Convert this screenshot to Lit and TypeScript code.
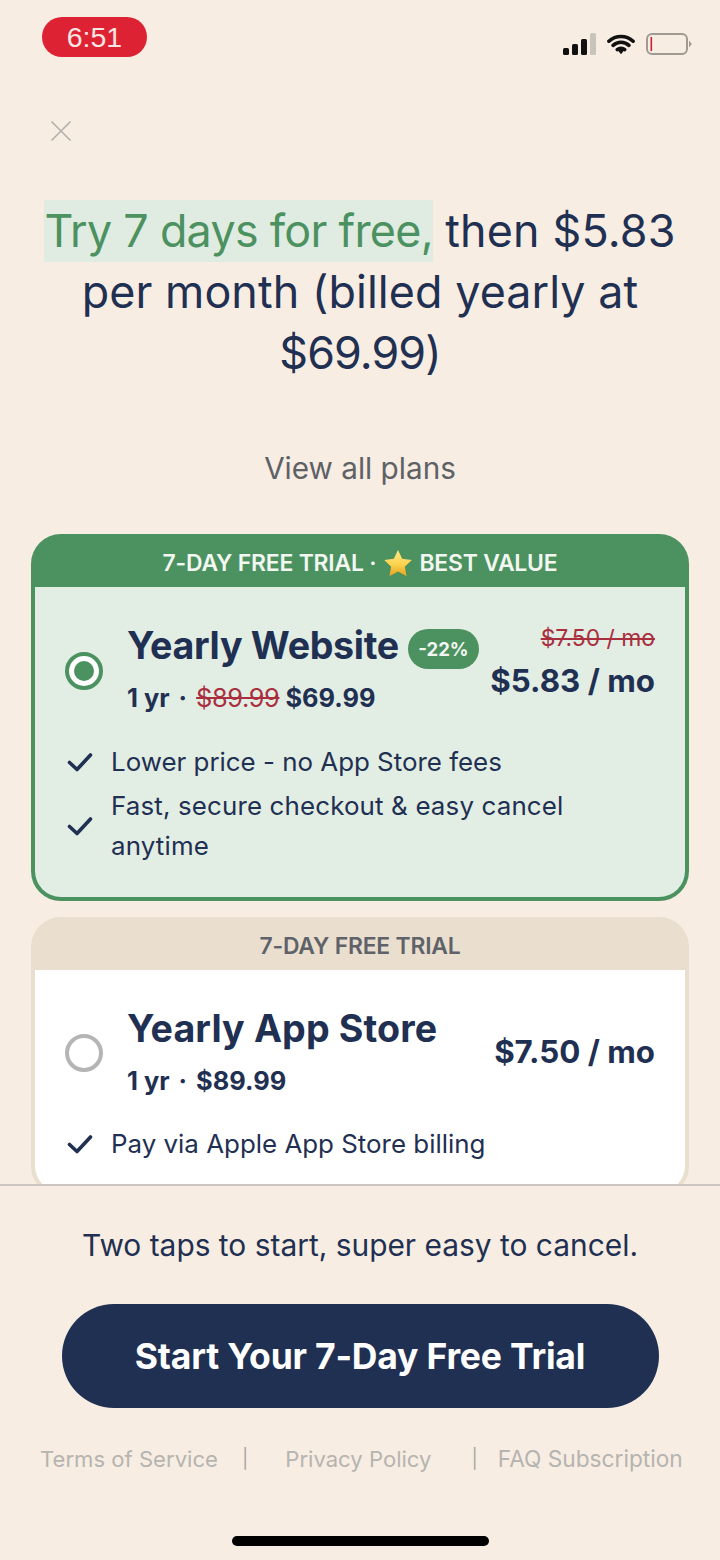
import { LitElement, html, css, svg } from 'lit';
import { customElement } from 'lit/decorators.js';

const check = svg`<path d="M2.500 12.500l7.500 7L23.500 5" fill="none" stroke="#1f3052" stroke-width="3.6" stroke-linecap="round" stroke-linejoin="round"/>`;

@customElement('app-root')
export class AppRoot extends LitElement {
  static styles = css`
    :host {
      display: flex;
      flex-direction: column;
      width: 720px;
      height: 1560px;
      background: #f7ede2;
      color: #1f3052;
      font-family: Inter, "Noto Sans", sans-serif;
      overflow: hidden;
    }
    .status {
      display: flex;
      justify-content: space-between;
      align-items: flex-start;
      padding: 17px 28px 0 42px;
      height: 75px;
      box-sizing: border-box;
    }
    .time {
      width: 105px;
      height: 40px;
      border-radius: 20px;
      background: #dd2333;
      color: #f9e6e4;
      font-family: "Liberation Sans", sans-serif;
      font-size: 28.5px;
      line-height: 40px;
      text-align: center;
    }
    .indicators {
      display: flex;
      align-items: center;
      gap: 11px;
      padding-top: 16px;
    }
    .scroll {
      flex: 1;
      min-height: 0;
      overflow: hidden;
      padding: 0 31px;
    }
    .close {
      display: block;
      margin: 45px 0 0 19px;
    }
    h1 {
      margin: 59px -10px 0;
      font-size: 44.8px;
      font-weight: 400;
      line-height: 61px;
      text-align: center;
      letter-spacing: -0.3px;
    }
    h1 mark {
      background: #e0ece2;
      color: #4c9160;
      padding: 4px 0;
      letter-spacing: -0.7px;
    }
    h1 .then { letter-spacing: 0.2px; }
    h1 .wide { letter-spacing: 0.1px; }
    h1 .short { letter-spacing: -0.9px; }
    .all {
      margin-top: 64px;
      font-size: 29.7px;
      line-height: 40px;
      color: #5e6166;
      text-align: center;
    }
    .card {
      display: flex;
      flex-direction: column;
      box-sizing: border-box;
      border-radius: 30px;
      border: 4px solid #4c9160;
      background: #4c9160;
    }
    .best { margin-top: 46px; }
    .other {
      margin-top: 16px;
      height: 279px;
      border-color: #eadfce;
      background: #eadfce;
    }
    .band {
      height: 49px;
      flex: none;
      font-size: 22.9px;
      font-weight: 600;
      line-height: 50px;
      text-align: center;
      letter-spacing: -0.2px;
      color: #f2f7f1;
    }
    .other .band { color: #5f6269; }
    .star { vertical-align: -6px; margin: 0 1px; }
    .body {
      flex: 1;
      border-radius: 0 0 26px 26px;
      background: #fff;
    }
    .best .body { background: #e2ede4; padding-bottom: 31px; }
    .plan {
      display: grid;
      grid-template-columns: 50px minmax(0, 1fr) auto;
      column-gap: 12px;
      align-items: center;
      padding: 36px 30px 0 30px;
    }
    .radio {
      width: 38px;
      height: 38px;
      border-radius: 50%;
      box-sizing: border-box;
      border: 4px solid #b5b5b5;
      background: #fff;
    }
    .radio.on {
      margin-top: 3px;
      border-color: #4c9160;
      display: flex;
      align-items: center;
      justify-content: center;
    }
    .radio.on::after {
      content: "";
      width: 20px;
      height: 20px;
      border-radius: 50%;
      background: #4c9160;
    }
    .name {
      display: flex;
      align-items: center;
      gap: 9px;
      font-size: 37.6px;
      font-weight: 700;
      line-height: 46px;
      letter-spacing: -0.3px;
      white-space: nowrap;
    }
    .other .name { letter-spacing: 0.14px; }
    .tag {
      width: 71px;
      height: 40px;
      flex: none;
      border-radius: 20px;
      background: #4c9160;
      color: #f2f7f1;
      font-size: 18.5px;
      font-weight: 700;
      line-height: 40px;
      text-align: center;
      letter-spacing: 0;
      margin-top: 6px;
    }
    .term {
      margin-top: 11px;
      font-size: 25.4px;
      font-weight: 700;
      line-height: 36px;
      white-space: nowrap;
    }
    .dot { margin: 0 3px; }
    .red {
      color: #a92f3f;
      font-weight: 400;
      text-decoration: line-through;
    }
    .term .red { letter-spacing: -0.4px; }
    .price {
      text-align: right;
      font-size: 31.3px;
      font-weight: 700;
      line-height: 40px;
      white-space: nowrap;
    }
    .was {
      font-size: 22.9px;
      line-height: 26px;
      display: block;
      margin-bottom: 10px;
    }
    .best .price { margin-top: -14px; }
    .other .price { margin-top: -2px; }
    .perks {
      list-style: none;
      margin: 0;
      padding: 26px 31px 0 32px;
    }
    .other .perks { padding-top: 25px; }
    .perks li {
      display: flex;
      align-items: center;
      gap: 18px;
      font-size: 25.9px;
      line-height: 40px;
      margin-bottom: 4px;
    }
    .perks li:last-child { margin-bottom: 0; }
    .perks svg { flex: none; }
    .perks .wide { letter-spacing: 0.15px; }
    .footer {
      height: 376px;
      box-sizing: border-box;
      border-top: 2px solid #c9c6c1;
      display: flex;
      flex-direction: column;
      align-items: center;
    }
    .note {
      margin-top: 40px;
      font-size: 29.9px;
      line-height: 38px;
    }
    .cta {
      margin-top: 40px;
      width: 597px;
      height: 104px;
      border: 0;
      border-radius: 52px;
      background: #1f3052;
      color: #fff;
      font: 700 35.5px Inter, "Noto Sans", sans-serif;
      letter-spacing: -0.2px;
    }
    .links {
      width: 100%;
      box-sizing: border-box;
      margin-top: 34px;
      padding-left: 40px;
      display: flex;
      align-items: center;
      font-size: 22.1px;
      line-height: 34px;
      color: #b6b4b0;
      white-space: nowrap;
    }
    .sep { font-size: 19px; color: #a9a7a3; margin: 0 37px 0 24px; }
    .sep.last { margin: 0 20px 0 40px; }
    .faq { font-size: 22.7px; }
    .home {
      margin-top: 60px;
      width: 257px;
      height: 10px;
      border-radius: 5px;
      background: #000;
    }
  `;

  render() {
    return html`
      <div class="status">
        <div class="time">6:51</div>
        <div class="indicators">
          <svg width="33" height="22" viewBox="0 0 33 22">
            <rect x="0" y="15" width="6" height="7" rx="1.5" fill="#111"/>
            <rect x="9" y="11" width="6" height="11" rx="1.5" fill="#111"/>
            <rect x="18" y="6" width="6" height="16" rx="1.5" fill="#111"/>
            <rect x="27" y="0" width="6" height="22" rx="1.5" fill="#c9c4bb"/>
          </svg>
          <svg width="28" height="22" viewBox="0 0 30 22">
            <path d="M2 8a19 19 0 0 1 26 0M6.500 12.500a12.500 12.500 0 0 1 17 0M11 17a6 6 0 0 1 8 0" fill="none" stroke="#111" stroke-width="3.8" stroke-linecap="round"/>
            <path d="M11.800 18l3.200-2.200L18.200 18 15 22z" fill="#111"/>
          </svg>
          <svg width="46" height="22" viewBox="0 0 46 22">
            <rect x="1" y="1" width="40" height="20" rx="5" fill="none" stroke="#a09a92" stroke-width="2"/>
            <rect x="4.500" y="4" width="1.600" height="14" fill="#c8233a"/>
            <path d="M43 7.500l2.800 3.500-2.800 3.500z" fill="#a09a92"/>
          </svg>
        </div>
      </div>
      <div class="scroll">
        <svg class="close" width="22" height="22" viewBox="0 0 22 22">
          <path d="M1.500 1.500l19 19M20.500 1.500l-19 19" stroke="#b3b1ac" stroke-width="1.700" fill="none"/>
        </svg>
        <h1><mark>Try 7 days for free,</mark> <span class="then">then $5.83</span><br><span class="wide">per month (billed yearly at</span><br><span class="short">$69.99)</span></h1>
        <div class="all">View all plans</div>

        <div class="card best">
          <div class="band">7-DAY FREE TRIAL · <svg class="star" width="30" height="28" viewBox="0 0 30 28"><defs><linearGradient id="st" x1="0" y1="0" x2="0" y2="1"><stop offset="0" stop-color="#ffe98a"/><stop offset=".55" stop-color="#fcd34d"/><stop offset="1" stop-color="#e6a21f"/></linearGradient></defs><path d="M15 1l4.200 8.800 9.600 1.200-7 6.700 1.800 9.500L15 22.600l-8.600 4.600 1.800-9.500-7-6.700 9.600-1.200z" fill="url(#st)"/></svg> BEST VALUE</div>
          <div class="body">
            <div class="plan">
              <div class="radio on"></div>
              <div>
                <div class="name">Yearly Website <span class="tag">-22%</span></div>
                <div class="term">1 yr<span class="dot"> · </span><span class="red">$89.99</span> $69.99</div>
              </div>
              <div class="price"><span class="was red">$7.50 / mo</span>$5.83 / mo</div>
            </div>
            <ul class="perks">
              <li><svg width="26" height="24" viewBox="0 0 26 24">${check}</svg>Lower price - no App Store fees</li>
              <li><svg width="26" height="24" viewBox="0 0 26 24">${check}</svg><span class="wide">Fast, secure checkout &amp; easy cancel anytime</span></li>
            </ul>
          </div>
        </div>

        <div class="card other">
          <div class="band">7-DAY FREE TRIAL</div>
          <div class="body">
            <div class="plan">
              <div class="radio"></div>
              <div>
                <div class="name">Yearly App Store</div>
                <div class="term">1 yr<span class="dot"> · </span>$89.99</div>
              </div>
              <div class="price">$7.50 / mo</div>
            </div>
            <ul class="perks">
              <li><svg width="26" height="24" viewBox="0 0 26 24">${check}</svg>Pay via Apple App Store billing</li>
            </ul>
          </div>
        </div>
      </div>
      <div class="footer">
        <div class="note">Two taps to start, super easy to cancel.</div>
        <button class="cta">Start Your 7-Day Free Trial</button>
        <div class="links">
          <span>Terms of Service</span><span class="sep">|</span><span>Privacy Policy</span><span class="sep last">|</span><span class="faq">FAQ Subscription</span>
        </div>
        <div class="home"></div>
      </div>
    `;
  }
}
